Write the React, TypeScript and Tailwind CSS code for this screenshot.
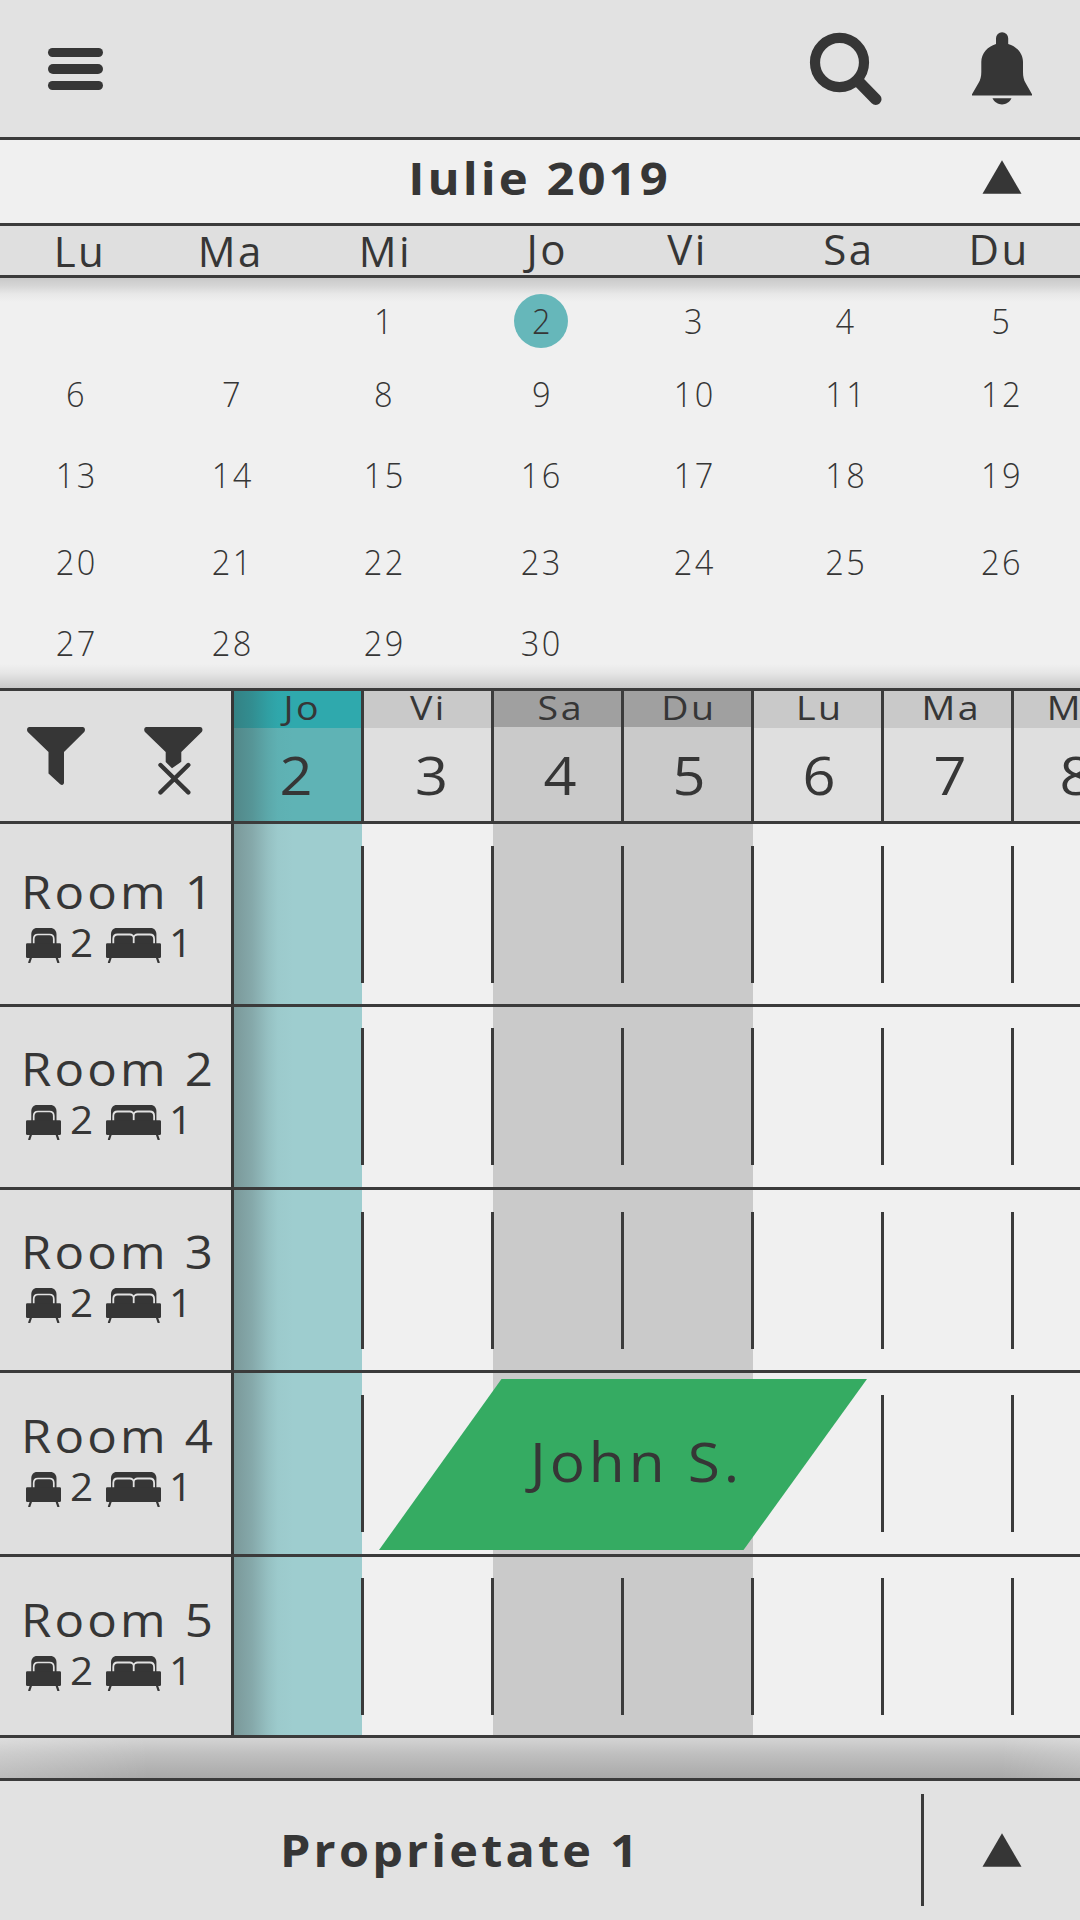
import React from "react";
import clsx from "clsx";

type Column = {
  day: string;
  date: string;
  kind: "today" | "weekday" | "weekend";
  width: string;
  dayShift: string;
  dateShift: string;
};

const columns: Column[] = [
  { day: "Jo", date: "2", kind: "today", width: "w-32", dayShift: "translate-x-[3px]", dateShift: "-translate-x-[2px]" },
  { day: "Vi", date: "3", kind: "weekday", width: "w-[131px]", dayShift: "-translate-x-[0.5px]", dateShift: "translate-x-[4px]" },
  { day: "Sa", date: "4", kind: "weekend", width: "w-[130px]", dayShift: "translate-x-[1.5px]", dateShift: "translate-x-[2px]" },
  { day: "Du", date: "5", kind: "weekend", width: "w-[130px]", dayShift: "-translate-x-[0.5px]", dateShift: "translate-x-[1px]" },
  { day: "Lu", date: "6", kind: "weekday", width: "w-[130px]", dayShift: "translate-x-[0.5px]", dateShift: "translate-x-[1px]" },
  { day: "Ma", date: "7", kind: "weekday", width: "w-[130px]", dayShift: "translate-x-[2px]", dateShift: "translate-x-[2px]" },
  { day: "Mi", date: "8", kind: "weekday", width: "w-[130px]", dayShift: "-translate-x-[8.5px]", dateShift: "-translate-x-[2px]" },
];

const weekdays = [
  { label: "Lu", shift: "translate-x-[1.5px]" },
  { label: "Ma", shift: "-translate-x-[2px]" },
  { label: "Mi", shift: "-translate-x-[1.5px]" },
  { label: "Jo", shift: "translate-x-[6px] -translate-y-[2.5px]" },
  { label: "Vi", shift: "-translate-x-[8px] -translate-y-[2.5px]" },
  { label: "Sa", shift: "-translate-x-[1px] -translate-y-[2.5px]" },
  { label: "Du", shift: "-translate-x-[5px] -translate-y-[2.5px]" },
];

const dateShifts = [
  "-translate-x-[2px]",
  "translate-x-0",
  "-translate-x-[2px]",
  "translate-x-[1px]",
  "-translate-x-[1px]",
  "-translate-x-[3.5px]",
  "-translate-x-[1.8px]",
];

const weeks = [
  { days: ["", "", "1", "2", "3", "4", "5"], gap: "mt-4" },
  { days: ["6", "7", "8", "9", "10", "11", "12"], gap: "mt-[19px]" },
  { days: ["13", "14", "15", "16", "17", "18", "19"], gap: "mt-[27px]" },
  { days: ["20", "21", "22", "23", "24", "25", "26"], gap: "mt-[33px]" },
  { days: ["27", "28", "29", "30", "", "", ""], gap: "mt-[27px]" },
];

const rooms = [
  { name: "Room 1", height: "h-[183px]", pad: "pt-[45px]", inset: "pt-[22px]" },
  { name: "Room 2", height: "h-[183px]", pad: "pt-[38.5px]", inset: "pt-[21px]" },
  { name: "Room 3", height: "h-[183px]", pad: "pt-[38.5px]", inset: "pt-[22px]" },
  { name: "Room 4", height: "h-[184px]", pad: "pt-[39.5px]", inset: "pt-[22px]", guest: "John S." },
  { name: "Room 5", height: "h-[181px]", pad: "pt-[39.5px]", inset: "pt-[21px]" },
];

function SearchIcon() {
  return (
    <svg viewBox="0 0 74 74" className="h-[74px] w-[74px]" fill="none" stroke="#363636">
      <ellipse cx="30.5" cy="30.5" rx="24.5" ry="24.6" strokeWidth="10.2" />
      <path d="M49 49 66.8 67.2" strokeWidth="11.5" strokeLinecap="round" />
    </svg>
  );
}

function BellIcon() {
  return (
    <svg viewBox="0 0 60 73" className="h-[73px] w-[60px]" fill="#363636">
      <path d="M24 12V6.300a6.100 6.100 0 0 1 12.200 0V12C45 14.500 51 21.500 51 30v10c0 4.500.8 8 2.600 11L60 62.200V63.500H0V62.200L6.500 51C8.400 48 9.300 44.500 9.300 40V30C9.300 21.500 15.500 14.500 24 12Z" />
      <path d="M20.500 66.300h19C37.500 70.300 34 72.500 30 72.500s-7.500-2.200-9.500-6.200Z" />
    </svg>
  );
}

function Triangle() {
  return (
    <svg viewBox="0 0 40 34" className="h-[34px] w-10" fill="#363636">
      <path d="M20 .3 39.500 33.700H.5Z" />
    </svg>
  );
}

function FunnelIcon() {
  return (
    <svg viewBox="0 0 58 59" className="h-[59px] w-[58px]" fill="#363636">
      <path d="M2.500 0h53C58 0 58.700 3 57.200 5L37 25V55.500c0 2.500-2.200 3-3.800 1.700L21.500 46.500V25L.8 5C-.7 3 0 0 2.500 0Z" />
    </svg>
  );
}

function ClearFunnelIcon() {
  return (
    <svg viewBox="0 0 59 68" className="h-[68px] w-[59px]" fill="#363636">
      <path d="M2.500 0h53.500C58.500 0 59.200 3 57.700 5L37.300 25V34.800L28 41.300 21.700 35V25L1 5C-.5 3 .2 0 2.500 0Z" />
      <path
        d="M16.500 38 44.300 65.400M44.300 38 16.500 65.400"
        stroke="#363636"
        strokeWidth="4.400"
        strokeLinecap="round"
      />
    </svg>
  );
}

function SingleBedIcon() {
  return (
    <svg viewBox="0 0 35 35" className="h-[35px] w-[35px] shrink-0" fill="#363636">
      <path d="M5.300 16V6.500C5.300 2.500 7.500 0 11 0h13.500c3.500 0 6 2.500 6 6.500V16Z" />
      <path d="M7.700 17v-6c0-3 1.700-4.500 4.300-4.500h11.500c2.600 0 4.300 1.500 4.300 4.500v6" fill="none" stroke="#e2e2e2" strokeWidth="1.700" />
      <path d="M1.200 15.300h32.600a1.200 1.200 0 0 1 1.200 1.200v12.200a1.400 1.400 0 0 1-1.400 1.400H1.400A1.400 1.400 0 0 1 0 28.700V16.500a1.200 1.200 0 0 1 1.200-1.200Z" />
      <path d="M5 29.500 3.300 34.300M30.600 29.500 32.300 34.300" stroke="#363636" strokeWidth="2.200" strokeLinecap="round" />
    </svg>
  );
}

function DoubleBedIcon() {
  return (
    <svg viewBox="0 0 55 35" className="h-[35px] w-[55px] shrink-0" fill="#363636">
      <path d="M5 16V6.500C5 2.500 7.200 0 10.700 0h34c3.500 0 5.700 2.500 5.700 6.500V16Z" />
      <path
        d="M7.300 17v-6c0-3 1.700-4.500 4.300-4.500h12.200c2 0 3.900 1.300 3.900 3.500V15.500M27.700 15.500V10c0-2.200 1.900-3.500 3.900-3.500h12.200c2.600 0 4.300 1.500 4.300 4.500v6"
        fill="none"
        stroke="#e2e2e2"
        strokeWidth="1.800"
      />
      <path d="M1.200 15.300h52.600a1.200 1.200 0 0 1 1.200 1.200v12.200a1.400 1.400 0 0 1-1.400 1.400H1.400A1.400 1.400 0 0 1 0 28.700V16.500a1.200 1.200 0 0 1 1.200-1.200Z" />
      <path d="M4.700 29.500 3 34.300M50.900 29.500 52.600 34.300" stroke="#363636" strokeWidth="2.200" strokeLinecap="round" />
    </svg>
  );
}

function TopBar() {
  return (
    <header className="flex h-[140px] items-start justify-between border-b-[3px] border-[#3b3b3b] bg-[#e2e2e2] pr-12 pl-[47.5px]">
      <button className="mt-12 flex flex-col gap-[7px]" aria-label="Menu">
        <span className="h-[9.3px] w-[55px] rounded-full bg-[#363636]" />
        <span className="h-[9.3px] w-[55px] rounded-full bg-[#363636]" />
        <span className="h-[9.3px] w-[55px] rounded-full bg-[#363636]" />
      </button>
      <div className="mt-8 flex items-start gap-[89px]">
        <SearchIcon />
        <BellIcon />
      </div>
    </header>
  );
}

function MonthCalendar() {
  return (
    <section className="h-[548px] bg-[#f0f0f0]">
      <div className="grid h-[86px] grid-cols-[1fr_auto_1fr] border-b-[3px] border-[#3b3b3b]">
        <h1 className="col-start-2 -translate-x-px scale-x-[1.08] text-[45.4px] leading-[75px] font-bold tracking-[2.8px]">
          Iulie 2019
        </h1>
        <button className="mt-5 mr-[58px] h-[34px] justify-self-end" aria-label="Collapse calendar">
          <Triangle />
        </button>
      </div>
      <div className="grid h-[52px] grid-cols-7 border-b-[3px] border-[#3b3b3b] bg-[#dfdfdf]">
        {weekdays.map((d) => (
          <span key={d.label} className={clsx("pl-[2.5px] text-center text-[42px] leading-[49px] tracking-[2.4px]", d.shift)}>
            {d.label}
          </span>
        ))}
      </div>
      <div className="flow-root h-[410px] bg-[linear-gradient(to_bottom,#c9c9c9_0px,#d6d6d6_8px,#e8e8e8_16px,#f0f0f0_24px,#f0f0f0_386px,#e6e6e6_395px,#d6d6d6_403px,#c9c9c9_410px)]">
        {weeks.map((week) => (
          <div key={week.gap + week.days[0]} className={clsx("grid h-[54px] grid-cols-7", week.gap)}>
            {week.days.map((day, i) => (
              <div key={i} className="flex justify-center">
                <div
                  className={clsx(
                    "flex h-[54px] w-[54px] justify-center rounded-full",
                    dateShifts[i],
                    day === "2" && "bg-[#66b7ba]",
                  )}
                >
                  <span className="scale-x-[0.93] pl-[2.4px] text-[35px] leading-[54px] font-[340] tracking-[2.4px]">{day}</span>
                </div>
              </div>
            ))}
          </div>
        ))}
      </div>
    </section>
  );
}

function TimelineHeader() {
  return (
    <div className="flex h-[136px] border-y-[3px] border-[#3b3b3b]">
      <div className="flex w-[234px] shrink-0 items-start gap-[58.500px] border-r-[3px] border-[#363636] bg-[#dfdfdf] pt-9 pl-[27px]">
        <FunnelIcon />
        <ClearFunnelIcon />
      </div>
      {columns.map((c) => (
        <div
          key={c.date}
          className={clsx(
            "relative flex shrink-0 justify-end",
            c.width,
            c.kind === "today" && "bg-[#5fb3b5]",
            c.kind === "weekday" && "bg-[#dfdfdf]",
            c.kind === "weekend" && "bg-[#cacaca]",
          )}
        >
          <div className="flex flex-1 flex-col text-center">
            <div
              className={clsx(
                c.kind === "today" && "h-[37px] bg-[#2fa9ad]",
                c.kind === "weekday" && "h-[37px] bg-[#c9c9c9]",
                c.kind === "weekend" && "h-9 bg-[#a0a0a0]",
              )}
            >
              <div className={clsx("scale-x-[1.12] pl-[2.3px] text-[33.5px] leading-8 tracking-[2.2px]", c.dayShift)}>{c.day}</div>
            </div>
            <div
              className={clsx(
                "h-0 scale-x-[1.09] text-[53px]",
                c.kind === "weekend" ? "leading-[95px]" : "leading-[93px]",
                c.dateShift,
              )}
            >
              {c.date}
            </div>
          </div>
          {c.kind === "today" && <TodayShade />}
          <div className={clsx("relative z-10 w-[3px] bg-[#3b3b3b]", c.kind === "today" ? "-mr-0.5 -ml-px" : "-mr-px -ml-0.5")} />
        </div>
      ))}
    </div>
  );
}

function TodayShade() {
  return (
    <div className="absolute inset-y-0 left-0 w-[60px] bg-[linear-gradient(to_right,rgba(60,60,60,0.36)_0px,rgba(60,60,60,0.25)_18px,rgba(60,60,60,0.09)_34px,rgba(60,60,60,0.02)_44px,rgba(60,60,60,0)_60px)]" />
  );
}

function Booking({ guest }: { guest: string }) {
  return (
    <div className="absolute top-[6px] left-[379px] z-20 h-[171px] w-[488px] bg-[#35ab62] text-center [clip-path:polygon(25.1%_0,100%_0,74.7%_100%,0_100%)]">
      <div className="translate-x-[13.5px] scale-x-[1.085] text-[54px] leading-[164px] tracking-[3.6px]">{guest}</div>
    </div>
  );
}

function RoomRow({ room }: { room: (typeof rooms)[number] }) {
  return (
    <div className={clsx("relative flex border-b-[3px] border-[#3b3b3b]", room.height)}>
      <div className={clsx("w-[234px] shrink-0 border-r-[3px] border-[#363636] bg-[#dfdfdf]", room.pad)}>
        <div className="ml-[20.5px] w-fit origin-left scale-x-[1.085] text-[45.4px] leading-[45px] tracking-[2.9px] whitespace-nowrap">
          {room.name}
        </div>
        <div className="mt-3.5 flex items-start pl-[26.3px] text-[37.5px] leading-[29px]">
          <SingleBedIcon />
          <span className="ml-[8.7px] w-[22.5px] origin-left scale-x-[1.08]">2</span>
          <span className="ml-[13.5px]">
            <DoubleBedIcon />
          </span>
          <span className="ml-[8.5px] origin-left scale-x-[1.08]">1</span>
        </div>
      </div>
      {columns.map((c) => (
        <div
          key={c.date}
          className={clsx(
            "relative flex shrink-0 justify-end",
            room.inset,
            c.width,
            c.kind === "today" && "bg-[#9ecdcf]",
            c.kind === "weekday" && "bg-[#f0f0f0]",
            c.kind === "weekend" && "bg-[#cacaca]",
          )}
        >
          {c.kind === "today" && <TodayShade />}
          <div className={clsx("relative z-10 h-[137px] w-[3px] bg-[#3b3b3b]", c.kind === "today" ? "-mr-0.5" : "-mr-px")} />
        </div>
      ))}
      {room.guest && <Booking guest={room.guest} />}
    </div>
  );
}

function Footer() {
  return (
    <footer className="flex h-[142px] border-t-[3px] border-[#3b3b3b] bg-[#e2e2e2]">
      <div className="w-[921px] text-center">
        <div className="scale-x-[1.08] text-[45px] leading-[137px] font-bold tracking-[2.95px]">Proprietate 1</div>
      </div>
      <div className="mt-[13px] h-28 w-[3px] bg-[#3b3b3b]" />
      <button className="mt-[52px] ml-[58px] h-[34px]" aria-label="Open property list">
        <Triangle />
      </button>
    </footer>
  );
}

export default function App() {
  return (
    <div className="flex h-[1920px] w-[1080px] flex-col overflow-hidden bg-[#e2e2e2] font-['Open_Sans','Noto_Sans',sans-serif] text-[#363636]">
      <TopBar />
      <MonthCalendar />
      <main>
        <TimelineHeader />
        {rooms.map((room) => (
          <RoomRow key={room.name} room={room} />
        ))}
      </main>
      <div className="h-10 bg-[linear-gradient(to_right,rgba(255,255,255,0.22)_0px,rgba(255,255,255,0)_150px,rgba(255,255,255,0)_1000px,rgba(255,255,255,0.15)_1080px),linear-gradient(to_bottom,#d4d4d4,#bfbfbf_40%,#a9a9a9)]" />
      <Footer />
    </div>
  );
}
